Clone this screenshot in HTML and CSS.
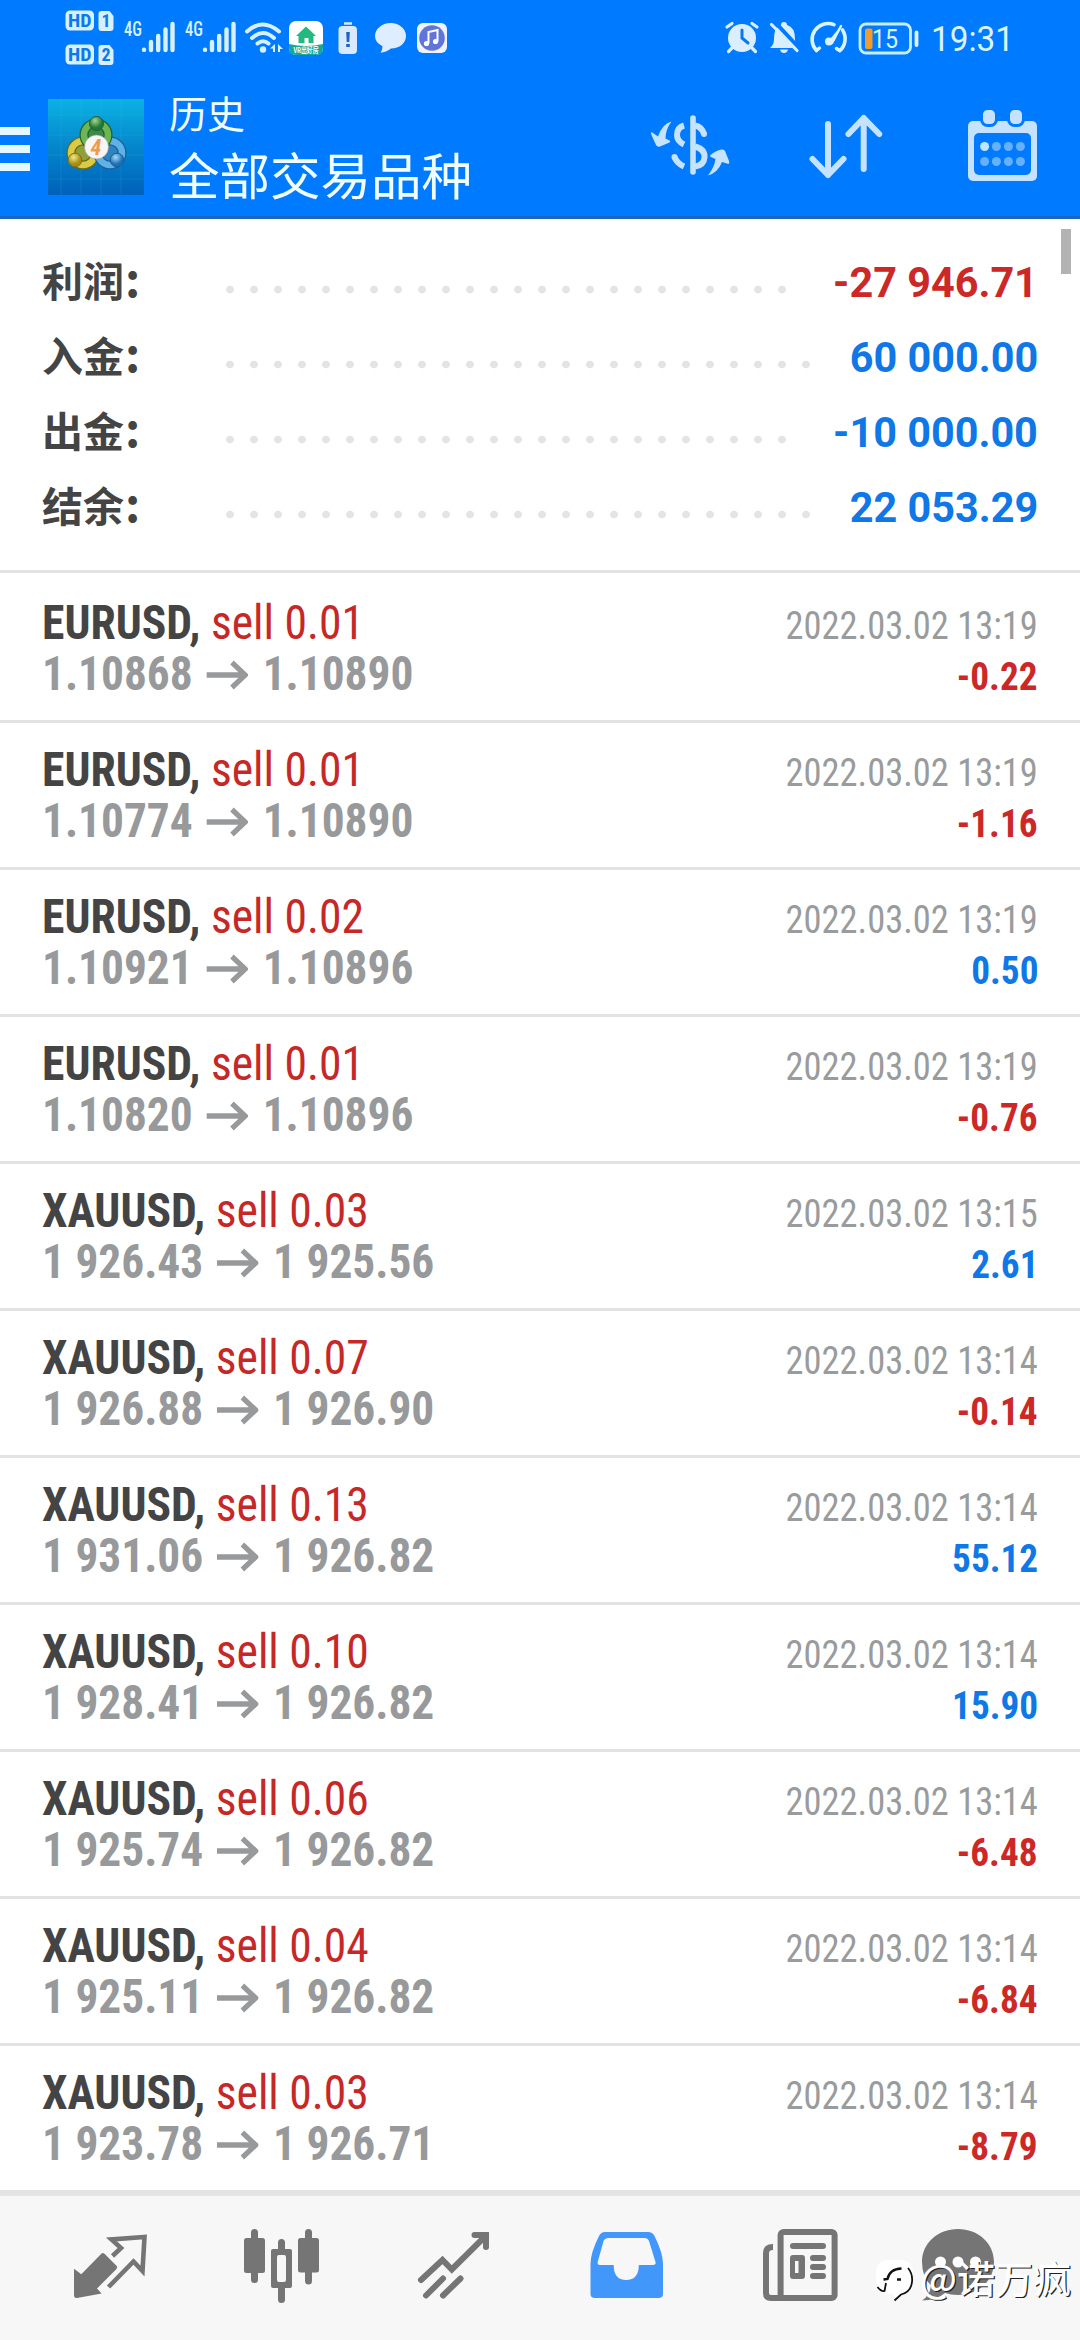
FILE: index.html
```html
<!DOCTYPE html>
<html lang="zh-CN">
<head>
<meta charset="utf-8">
<title>历史</title>
<link rel="stylesheet" href="styles.css">
</head>
<body>
<div class="screen">
<header class="header">
  <div class="status">
    <svg class="status-left" width="460" height="75" viewBox="0 0 460 75">
      <g fill="#d6f0ff">
        <rect x="65.500" y="10.500" width="28.500" height="20" rx="4.500"/>
        <rect x="65.500" y="44.500" width="28.500" height="20" rx="4.500"/>
        <path d="M101.500 11h8l4 5v12q0 3-3 3h-9q-3 0-3-3V14q0-3 3-3zM101.500 45h8l4 5v12q0 3-3 3h-9q-3 0-3-3V48q0-3 3-3z"/>
      </g>
      <g class="hd" fill="#0a78f0">
        <text x="68" y="27" textLength="23.500" lengthAdjust="spacingAndGlyphs">HD</text><text x="101.500" y="27">1</text>
        <text x="68" y="61" textLength="23.500" lengthAdjust="spacingAndGlyphs">HD</text><text x="101.500" y="61">2</text>
      </g>
      <g class="net" fill="#d6f0ff"><text x="124" y="36" textLength="18" lengthAdjust="spacingAndGlyphs">4G</text><text x="185" y="36" textLength="18" lengthAdjust="spacingAndGlyphs">4G</text></g>
      <path d="M144 49.800v.1M151 42v8M158.200 36v14M165.500 29.500v20.500M172.500 24v26M205 49.800v.1M212 42v8M219.200 36v14M226.500 29.500v20.500M233.500 24v26" fill="none" stroke="#d6f0ff" stroke-width="4.400" stroke-linecap="round"/>
      <g fill="none" stroke="#d6f0ff" stroke-width="4" stroke-linecap="round"><path d="M247 31.500q15.500-14 32 0M252 38q11-10 22 0M257.500 43.500q5.500-4.500 11 0"/></g>
      <circle cx="263" cy="49.500" r="3.200" fill="#d6f0ff"/>
      <path d="M270 48.500l5-4.500v8h-2v-3.500zM278 44l5 5h-3v3h-2z" fill="#d6f0ff"/>
      <rect x="289" y="21" width="34" height="34" rx="7" fill="#fff"/>
      <path d="M289 44q17 4 34 0v4q0 7-7 7h-20q-7 0-7-7z" fill="#12a99a"/>
      <path d="M296 36l10-9.500 10 9.500h-2.500v7h-5v-5h-4v5h-6v-7z" fill="#25b982"/>
      <text class="tiny" x="293.500" y="53" textLength="25" lengthAdjust="spacingAndGlyphs" fill="#fff">VR出好房</text>
      <rect x="338.500" y="26" width="18.500" height="28" rx="4" fill="#d9eaff"/><path d="M344 23.500h8" stroke="#d9eaff" stroke-width="2.500"/><path d="M346.200 32h3.600l-.5 10h-2.600zM346.200 44h3.600v3h-3.600z" fill="#1f62c4"/>
      <path d="M390.500 23c9 0 15.500 6 15.500 13s-6.500 12.500-15 12.500q-5 4-10.500 4.200 2-3 2-6.500Q375 42.500 375 36c0-7 7-13 15.500-13z" fill="#deedff"/>
      <rect x="417" y="23" width="30" height="30" rx="6" fill="#f1f2ff"/><circle cx="432" cy="38" r="12.800" fill="#6175d8"/>
      <path d="M428.500 43.500V32l9-2v11.500" fill="none" stroke="#fff" stroke-width="2"/><circle cx="426.500" cy="43.500" r="2.600" fill="#fff"/><circle cx="435.500" cy="41.500" r="2.600" fill="#fff"/>
    </svg>
    <svg width="296" height="75" viewBox="720 0 296 75">
      <circle cx="742" cy="38" r="14" fill="#d9eeff"/><path d="M742 30v8l6 5" fill="none" stroke="#0b78ef" stroke-width="3" stroke-linecap="round"/>
      <path d="M727 27l5-3.500M757 27l-5-3.500M732 48l-3.500 3.500M752 48l3.500 3.500" stroke="#d9eeff" stroke-width="3.200" stroke-linecap="round"/>
      <path d="M770 48q4-3 4-9 0-12 7-14 0-3 3-3t3 3q8 2 8 14 0 6 3 9z" fill="#d9eeff"/>
      <path d="M780 49.500h8q-1 3.500-4 3.500t-4-3.500z" fill="#d9eeff"/>
      <path d="M774 21l26 28" stroke="#007aff" stroke-width="4"/><path d="M771.500 24.500l25.500 26" stroke="#d9eeff" stroke-width="3.200" stroke-linecap="round"/>
      <path d="M834 24.600a16 16 0 0 0-17.500 25.900M842.500 30a16 16 0 0 1-2.500 20.500" fill="none" stroke="#d9f4ff" stroke-width="3.600" stroke-linecap="round"/>
      <path d="M841 26l-9 17" stroke="#d9f4ff" stroke-width="2.500" stroke-linecap="round"/><path d="M841 26l-10.500 12.500 4 2.500z" fill="#d9f4ff"/><circle cx="829" cy="41.500" r="4" fill="#d9f4ff"/>
      <path d="M816.500 50.500l3-2.500M839.500 50.500l-3-2" stroke="#d9f4ff" stroke-width="3.400" stroke-linecap="round"/>
      <rect x="860" y="24" width="50.500" height="29" rx="6" fill="none" stroke="#c5efff" stroke-width="2.800"/>
      <rect x="865" y="28.500" width="7.500" height="20.500" rx="2" fill="#f39b2d"/><path d="M916.500 32.500v12.500" stroke="#d9f4ff" stroke-width="3.800" stroke-linecap="round"/>
      <text class="pct" x="872" y="48" textLength="26" lengthAdjust="spacingAndGlyphs" fill="#d9f4ff">15</text>
      <text class="clock" x="931" y="51" textLength="83" lengthAdjust="spacingAndGlyphs" fill="#d9f4ff">19:31</text>
    </svg>
  </div>
  <div class="toolbar">
    <svg width="48" height="144" viewBox="0 75 48 144"><path d="M0 131h30M0 149h30M0 167h30" stroke="#e4f9ff" stroke-width="8"/></svg>
    <svg width="96" height="144" viewBox="48 75 96 144">
      <defs>
        <linearGradient id="sky" x1="0" y1="0" x2="0" y2="1"><stop offset="0" stop-color="#0bb2e4"/><stop offset=".5" stop-color="#0486cb"/><stop offset="1" stop-color="#0061ba"/></linearGradient>
        <radialGradient id="gg" cx=".4" cy=".3"><stop offset="0" stop-color="#a5d58d"/><stop offset="1" stop-color="#237a38"/></radialGradient>
        <radialGradient id="gy" cx=".4" cy=".3"><stop offset="0" stop-color="#f3e98a"/><stop offset="1" stop-color="#a58e16"/></radialGradient>
        <radialGradient id="gb" cx=".4" cy=".3"><stop offset="0" stop-color="#a5dcf8"/><stop offset="1" stop-color="#1c70b8"/></radialGradient>
      </defs>
      <rect x="48" y="99" width="96" height="96" fill="url(#sky)"/>
      <path d="M61 99v96M81 99v96M101 99v96M121 99v96M48 115h96M48 135h96M48 155h96M48 179h96" stroke="#59c6ec" stroke-opacity=".15" stroke-width="1"/>
      <circle cx="83" cy="153" r="12" fill="#8fa03a" stroke="#6d6a14" stroke-width="9"/><circle cx="83" cy="153" r="12" fill="none" stroke="#d9cb45" stroke-width="6.500"/>
      <circle cx="110" cy="153" r="12" fill="#2f84bf" stroke="#1c5f9e" stroke-width="9"/><circle cx="110" cy="153" r="12" fill="none" stroke="#5eb2e6" stroke-width="6.500"/>
      <circle cx="96" cy="135" r="12" fill="#3c8a4a" stroke="#1d6632" stroke-width="9"/><circle cx="96" cy="135" r="12" fill="none" stroke="#6db653" stroke-width="6.500"/>
      <circle cx="96.500" cy="123.500" r="7" fill="url(#gg)" stroke="#1d5f30"/><circle cx="75" cy="160" r="6.800" fill="url(#gy)" stroke="#806f18"/><circle cx="117" cy="160" r="6.800" fill="url(#gb)" stroke="#1a5d98"/>
      <circle cx="96.500" cy="147" r="12" fill="#f8f6f4" stroke="#999" stroke-width=".6"/>
      <text class="four" x="96" y="155" text-anchor="middle" fill="#ef9a4d">4</text>
    </svg>
    <div class="titles"><div class="page">历史</div><div class="filter">全部交易品种</div></div>
    <svg width="156" height="144" viewBox="612 75 156 144">
      <g fill="#c5e3ff"><path d="M671.500 121.500q-9 2-13.500 15l-6.500-4.500q-1 1.500 0 3l4.500 10q1.500 2.500 4 1.500l9.500-4q1.500-1 0-2l-4-2q0-9 6-17z"/>
      <path d="M708 175.500q10-3 14-13.500l6.500 2q1.300-.5.500-3l-4-10q-1-2-3.500-1.500-6 1-11 5.500-1.200 1.500.5 2l4.500 2q-1 8-7.500 16.500z"/></g>
      <path d="M693 118v54" stroke="#c5e3ff" stroke-width="5.600" stroke-linecap="round"/>
      <path d="M684 125.500q-7 2-7 9.500 0 6 7 9.500M695 125.500q7 1.500 9 8.500M674.500 157q2 6 9.500 9.500M695 146.500q10 2.500 9.500 11-.5 7.500-9.500 9" fill="none" stroke="#c5e3ff" stroke-width="6"/>
      <circle cx="704" cy="134" r="3" fill="#c5e3ff"/><circle cx="674.500" cy="157" r="3" fill="#c5e3ff"/>
    </svg>
    <svg width="156" height="144" viewBox="768 75 156 144"><path d="M828 124v51M812.500 159l15.500 16 15.500-16M863.700 169v-51M848.500 134l15.200-16 15.500 16" fill="none" stroke="#c5e3ff" stroke-width="6" stroke-linecap="round" stroke-linejoin="round"/></svg>
    <svg width="156" height="144" viewBox="924 75 156 144">
      <rect x="968" y="121" width="69" height="60" rx="5" fill="#c5e3ff"/><rect x="974" y="133" width="57" height="42" rx="5" fill="#007aff"/>
      <g fill="#c5e3ff" stroke="#007aff" stroke-width="3"><rect x="981.500" y="108.500" width="15" height="17" rx="6"/><rect x="1008.500" y="108.500" width="15" height="17" rx="6"/></g>
      <g fill="#66b0ff"><circle cx="984.600" cy="146.500" r="4.500" fill="#bfe6ff"/><circle cx="996.400" cy="146.500" r="4.500"/><circle cx="1008.400" cy="146.500" r="4.500"/><circle cx="1020.400" cy="146.500" r="4.500"/><circle cx="984.600" cy="161.500" r="4.500"/><circle cx="996.400" cy="161.500" r="4.500"/><circle cx="1008.400" cy="161.500" r="4.500"/><circle cx="1020.400" cy="161.500" r="4.500"/></g>
    </svg>
  </div>
</header>

<section class="summary">
  <div class="scrollbar"></div>
  <div class="sum"><span class="label">利润<em>:</em></span><i class="dots"></i><b class="neg">-27 946.71</b></div>
  <div class="sum"><span class="label">入金<em>:</em></span><i class="dots"></i><b class="pos">60 000.00</b></div>
  <div class="sum"><span class="label">出金<em>:</em></span><i class="dots"></i><b class="pos">-10 000.00</b></div>
  <div class="sum"><span class="label">结余<em>:</em></span><i class="dots"></i><b class="pos">22 053.29</b></div>
</section>

<main class="deals" id="deals"></main>

<nav class="nav">
  <svg viewBox="24 2196 172 144"><path d="M74 2268.700l7.300 5.500 20-20.500q1.700-1.500 3.200 0l12 12q1.200 1.700 0 3.300L97 2288.500l4.600 5-24.600 4.500q-3 .3-3-2.500z" fill="#757575"/><path d="M112.500 2256l8.500-8-9.500-8.500 33-2.500-2 34-9-9.500-25 25.500" fill="none" stroke="#757575" stroke-width="4.600"/></svg>
  <svg viewBox="196 2196 172 144"><g fill="#757575"><rect x="244" y="2238" width="21" height="35" rx="2.500"/><rect x="298" y="2238" width="21" height="34.500" rx="2.500"/><path fill-rule="evenodd" d="M273 2249h17q2 0 2 2v35q0 2-2 2h-17q-2 0-2-2v-35q0-2 2-2zm6 6q-2 0-2 2v23q0 2 2 2h5q2 0 2-2v-23q0-2-2-2z"/></g><path d="M254.500 2232.500v47M308.500 2232.500v48.500M281.500 2242.500v7M281.500 2287v12.500" stroke="#757575" stroke-width="7" stroke-linecap="round"/></svg>
  <svg viewBox="368 2196 172 144"><path d="M421 2280l21.500-20 9.300 9.500 34.200-34M474.500 2235h11.500v12M426 2295.500l17-17M443 2295.500l17.500-17" fill="none" stroke="#757575" stroke-width="6" stroke-linecap="round" stroke-linejoin="miter"/></svg>
  <svg viewBox="540 2196 172 144"><path fill="#4298fa" fill-rule="evenodd" d="M605 2232h43q4.500 0 6.500 4 8.500 17 8.500 28v30q0 4-4.500 4h-63.500q-4.500 0-4.500-4v-30q0-11 8.500-28 2-4 6-4zm3 6q-3 0-4.300 2.500l-6 21.500q-.7 3 2.300 3h13.700q0 15 12.500 15t12.600-15h14q3.500 0 2.700-3l-6.500-21q-1.300-3-4.500-3z"/></svg>
  <svg viewBox="712 2196 172 144"><g fill="none" stroke="#757575" stroke-width="6"><rect x="780.600" y="2232" width="54" height="66" rx="3"/><path d="M773 2247q-7 0-7 6v40q0 5 5 5h12"/></g><path fill="#757575" fill-rule="evenodd" d="M793 2243h30q3 0 3 3t-3 3h-30q-3 0-3-3t3-3zM793 2255h9q3 0 3 3v18q0 3-3 3h-9q-3 0-3-3v-18q0-3 3-3zm2 6v12h3.500v-12zM813 2255h10q3 0 3 3t-3 3h-10q-3 0-3-3t3-3zM813 2264h10q3 0 3 3t-3 3h-10q-3 0-3-3t3-3zM813 2273h10q3 0 3 3t-3 3h-10q-3 0-3-3t3-3z"/></svg>
  <svg viewBox="884 2196 172 144"><path d="M958 2229c20 0 36 14 36 33s-16 33-36 33q-7 0-13-2-9 7.500-23 7.500 8-5 9-15-9-9-9-23.500c0-19 16-33 36-33z" fill="#757575"/><g fill="#fff"><circle cx="940.500" cy="2262" r="5.500"/><circle cx="958" cy="2262" r="5.500"/><circle cx="975.500" cy="2262" r="5.500"/></g></svg>
  <div class="watermark">
    <svg width="47" height="50" viewBox="873 2256 47 50"><path d="M888 2260h12q13 0 13 14v7q0 11-11 13l-5 6-5-6h-4q-12-1-12-14v-6q0-14 12-14z" fill="#fff"/><path d="M908 2268q5 6 4 14-1 10-11 12.500l-6.500 6M877.500 2287q4 5 7 4l1.500-8" fill="none" stroke="#111" stroke-width="1.800"/><path d="M883.500 2279.500l4-.5q2-10 14-10.500M897 2279.500h4" fill="none" stroke="#111" stroke-width="2.400"/></svg>
    <span>@诺万疯</span>
  </div>
</nav>
</div>
<script src="deals.js"></script>
</body>
</html>
```
FILE: styles.css
```css
* { box-sizing: border-box; }
body { margin: 0; background: #fff; font-family: Roboto, "Noto Sans CJK SC", sans-serif; }
svg { display: block; flex: none; }
.screen { width: 1080px; height: 2340px; display: flex; flex-direction: column; overflow: hidden; }

.header { height: 219px; background: #007aff; border-bottom: 3px solid #1a66c4; }
.status { height: 75px; display: flex; justify-content: space-between; padding-right: 64px; }
.hd { font: 700 18px "Roboto Condensed", sans-serif; }
.net { font: 500 20px "Roboto Condensed", sans-serif; }
.tiny { font: 700 8px "Noto Sans CJK SC", sans-serif; }
.pct { font: 400 26px Roboto, sans-serif; }
.clock { font: 400 35px Roboto, sans-serif; }
.four { font: italic 700 22px "Roboto Condensed", sans-serif; }
.toolbar { height: 141px; display: flex; overflow: hidden; }
.titles { flex: 1; padding: 9px 0 0 25px; color: #f0fdff; white-space: nowrap; font-family: "Noto Sans CJK SC", sans-serif; }
.page { font-size: 38px; line-height: 56px; }
.filter { font-size: 50.500px; line-height: 66px; }

.summary { position: relative; height: 354px; padding: 26px 42px 0; border-bottom: 3px solid #e3e3e3; }
.scrollbar { position: absolute; right: 9px; top: 10px; width: 10px; height: 45px; background: #b2b2b2; }
.sum { display: flex; height: 75px; line-height: 75px; font-size: 42px; }
.sum b { transform: scaleX(0.985); transform-origin: right; }
.label { width: 176px; font-size: 41px; font-weight: 700; color: #444; padding-top: 1px; }
.label em { font: 700 47px/1 "Noto Sans CJK SC", sans-serif; margin-left: 1px; }
.dots { flex: 1; margin-right: 36px; background: radial-gradient(circle at 12px 44.500px, #e4e4e4 3.500px, transparent 4.200px) 0 0 / 24px 75px repeat-x; }
.neg { color: #cc2828; }
.pos { color: #0f78e6; }

.deals { flex: 1; padding-top: 3px; font-family: "Roboto Condensed", Roboto, sans-serif; }
.deal { height: 147px; padding: 21px 42px 0; border-bottom: 3px solid #e3e3e3; }
.line { display: flex; justify-content: space-between; align-items: baseline; height: 51px; line-height: 51px; }
.symbol { font-size: 48px; color: #c62828; transform: scaleX(0.95); transform-origin: left; }
.symbol b { color: #444; }
.time { font-size: 39px; color: #999b9c; transform: scaleX(0.935); transform-origin: right; }
.price { font-size: 48px; font-weight: 700; color: #97999b; display: flex; transform: scaleX(0.945); transform-origin: left; }
.arrow { margin: 0 16px 0 14px; }
.profit { font-size: 39px; font-weight: 700; transform: scaleX(0.955); transform-origin: right; }

.nav { position: relative; height: 147px; flex: none; display: grid; grid-template-columns: repeat(6, 172px); padding: 0 24px; background: #f7f7f7; border-top: 3px solid #e5e5e5; }
.nav > svg { width: 172px; height: 144px; }
.watermark { position: absolute; left: 873px; top: 60px; display: flex; height: 50px; color: #fff; font: 500 38px/42px "Noto Sans CJK SC", sans-serif; text-shadow: 1.200px 1.200px 0 #222; white-space: nowrap; }
```
FILE: deals.js
```js
const rows = [
  ["EURUSD", "0.01", "1.10868", "1.10890", "13:19", "-0.22"],
  ["EURUSD", "0.01", "1.10774", "1.10890", "13:19", "-1.16"],
  ["EURUSD", "0.02", "1.10921", "1.10896", "13:19", "0.50"],
  ["EURUSD", "0.01", "1.10820", "1.10896", "13:19", "-0.76"],
  ["XAUUSD", "0.03", "1 926.43", "1 925.56", "13:15", "2.61"],
  ["XAUUSD", "0.07", "1 926.88", "1 926.90", "13:14", "-0.14"],
  ["XAUUSD", "0.13", "1 931.06", "1 926.82", "13:14", "55.12"],
  ["XAUUSD", "0.10", "1 928.41", "1 926.82", "13:14", "15.90"],
  ["XAUUSD", "0.06", "1 925.74", "1 926.82", "13:14", "-6.48"],
  ["XAUUSD", "0.04", "1 925.11", "1 926.82", "13:14", "-6.84"],
  ["XAUUSD", "0.03", "1 923.78", "1 926.71", "13:14", "-8.79"]
];
const arrow = '<svg class="arrow" width="44" height="51" viewBox="0 0 44 51"><path d="M0 27h41M27 14.500l14 12.500-14 12.500" fill="none" stroke="#97999b" stroke-width="5.500"/></svg>';
document.getElementById("deals").innerHTML = rows.map(([s, v, a, b, t, p]) =>
  `<article class="deal"><div class="line"><span class="symbol"><b>${s},</b> sell ${v}</span><span class="time">2022.03.02 ${t}</span></div>` +
  `<div class="line"><span class="price">${a}${arrow}${b}</span><span class="profit ${p[0] === "-" ? "neg" : "pos"}">${p}</span></div></article>`).join("");
```
